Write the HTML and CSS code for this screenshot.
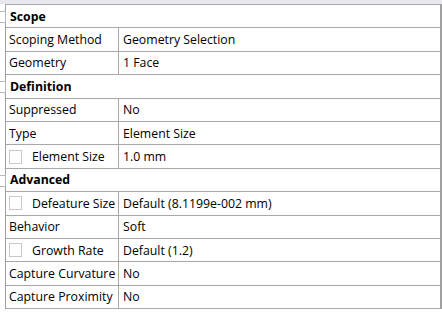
FILE: index.html
```html
<!DOCTYPE html>
<html>
<head>
<meta charset="utf-8">
<link rel="stylesheet" href="styles.css">
</head>
<body>
<div class="band"></div>
<div class="grid">
  <div class="section">Scope</div>
  <div class="row"><div class="k">Scoping Method</div><div class="v">Geometry Selection</div></div>
  <div class="row"><div class="k">Geometry</div><div class="v">1 Face</div></div>
  <div class="section">Definition</div>
  <div class="row"><div class="k">Suppressed</div><div class="v">No</div></div>
  <div class="row"><div class="k">Type</div><div class="v">Element Size</div></div>
  <div class="row"><div class="k"><span class="cb"></span>Element Size</div><div class="v">1.0 mm</div></div>
  <div class="section">Advanced</div>
  <div class="row"><div class="k"><span class="cb"></span>Defeature Size</div><div class="v">Default (8.1199e-002 mm)</div></div>
  <div class="row"><div class="k">Behavior</div><div class="v">Soft</div></div>
  <div class="row"><div class="k"><span class="cb"></span>Growth Rate</div><div class="v">Default (1.2)</div></div>
  <div class="row"><div class="k">Capture Curvature</div><div class="v">No</div></div>
  <div class="row last"><div class="k">Capture Proximity</div><div class="v">No</div></div>
</div>
</body>
</html>
```
FILE: styles.css
```css
html, body {
  margin: 0;
  padding: 0;
  background: #ffffff;
}
body {
  font-family: "Open Sans", "Noto Sans", sans-serif;
  font-size: 12.3px;
  color: #000;
}
.band {
  height: 4px;
  background: #e8e8ed;
}
.grid {
  margin-left: 5px;
  width: 434px;
  border-left: 1px solid #a0a0a0;
  border-right: 2px solid #a0a0a0;
}
.section, .row {
  height: 22.4px;
  border-top: 1px solid #a8a8a8;
  box-sizing: content-box;
}
.section {
  position: relative;
  display: flex;
  align-items: center;
  padding-left: 4px;
  font-weight: bold;
}
.section::before {
  content: "";
  position: absolute;
  left: -9px;
  top: 6px;
  width: 7px;
  height: 10px;
  border: 1px solid #b8b8b8;
  background: #fff;
}
.row {
  display: grid;
  grid-template-columns: 113px 1fr;
}
.row.last {
  border-bottom: 1px solid #a8a8a8;
}
.k, .v {
  display: flex;
  align-items: center;
  white-space: nowrap;
  overflow: hidden;
}
.k {
  padding-left: 3px;
  border-right: 1px solid #a8a8a8;
}
.v {
  padding-left: 4px;
}
.cb {
  width: 11px;
  height: 12px;
  border: 1px solid #c8c8c8;
  margin: 0 10px 0 0;
  flex: none;
}
```
